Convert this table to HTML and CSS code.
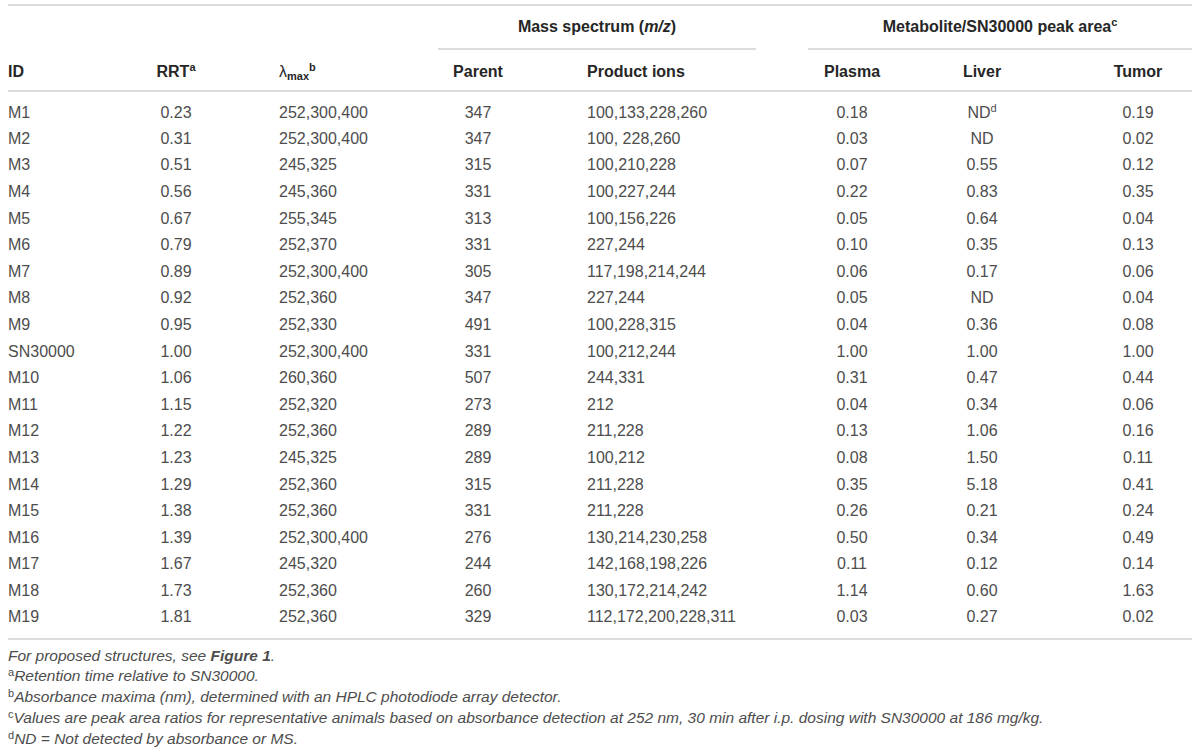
FILE: index.html
```html
<!DOCTYPE html>
<html lang="en">
<head>
    <meta charset="UTF-8">
    <title>Metabolites of SN30000</title>
    <link rel="stylesheet" href="styles.css">
</head>
<body>
    <div class="table-wrap">
        <table class="data">
            <colgroup>
                <col class="c-id">
                <col class="c-rrt">
                <col class="c-lambda">
                <col class="c-parent">
                <col class="c-ions">
                <col class="c-plasma">
                <col class="c-liver">
                <col class="c-tumor">
            </colgroup>
            <thead>
                <tr class="group-row">
                    <th colspan="3"></th>
                    <th colspan="2"><div class="group-line group-mass">Mass spectrum (<i>m/z</i>)</div></th>
                    <th colspan="3"><div class="group-line">Metabolite/SN30000 peak area<sup>c</sup></div></th>
                </tr>
                <tr class="head-row">
                    <th class="left">ID</th>
                    <th class="center">RRT<sup>a</sup></th>
                    <th class="left lam"><span class="lam-sym">λ</span><sub>max</sub><sup>b</sup></th>
                    <th class="center">Parent</th>
                    <th class="left ions">Product ions</th>
                    <th class="center">Plasma</th>
                    <th class="center">Liver</th>
                    <th class="center tumor">Tumor</th>
                </tr>
            </thead>
            <tbody id="rows"></tbody>
        </table>

        <div class="notes">
            <p><i>For proposed structures, see <b>Figure 1</b>.</i></p>
            <p><sup>a</sup><i>Retention time relative to SN30000.</i></p>
            <p><sup>b</sup><i>Absorbance maxima (nm), determined with an HPLC photodiode array detector.</i></p>
            <p><sup>c</sup><i>Values are peak area ratios for representative animals based on absorbance detection at 252 nm, 30 min after i.p. dosing with SN30000 at 186 mg/kg.</i></p>
            <p><sup>d</sup><i>ND = Not detected by absorbance or MS.</i></p>
        </div>
    </div>

    <script>
        const data = [
            ['M1', '0.23', '252,300,400', '347', '100,133,228,260', '0.18', 'ND<sup>d</sup>', '0.19'],
            ['M2', '0.31', '252,300,400', '347', '100, 228,260', '0.03', 'ND', '0.02'],
            ['M3', '0.51', '245,325', '315', '100,210,228', '0.07', '0.55', '0.12'],
            ['M4', '0.56', '245,360', '331', '100,227,244', '0.22', '0.83', '0.35'],
            ['M5', '0.67', '255,345', '313', '100,156,226', '0.05', '0.64', '0.04'],
            ['M6', '0.79', '252,370', '331', '227,244', '0.10', '0.35', '0.13'],
            ['M7', '0.89', '252,300,400', '305', '117,198,214,244', '0.06', '0.17', '0.06'],
            ['M8', '0.92', '252,360', '347', '227,244', '0.05', 'ND', '0.04'],
            ['M9', '0.95', '252,330', '491', '100,228,315', '0.04', '0.36', '0.08'],
            ['SN30000', '1.00', '252,300,400', '331', '100,212,244', '1.00', '1.00', '1.00'],
            ['M10', '1.06', '260,360', '507', '244,331', '0.31', '0.47', '0.44'],
            ['M11', '1.15', '252,320', '273', '212', '0.04', '0.34', '0.06'],
            ['M12', '1.22', '252,360', '289', '211,228', '0.13', '1.06', '0.16'],
            ['M13', '1.23', '245,325', '289', '100,212', '0.08', '1.50', '0.11'],
            ['M14', '1.29', '252,360', '315', '211,228', '0.35', '5.18', '0.41'],
            ['M15', '1.38', '252,360', '331', '211,228', '0.26', '0.21', '0.24'],
            ['M16', '1.39', '252,300,400', '276', '130,214,230,258', '0.50', '0.34', '0.49'],
            ['M17', '1.67', '245,320', '244', '142,168,198,226', '0.11', '0.12', '0.14'],
            ['M18', '1.73', '252,360', '260', '130,172,214,242', '1.14', '0.60', '1.63'],
            ['M19', '1.81', '252,360', '329', '112,172,200,228,311', '0.03', '0.27', '0.02']
        ];

        // same alignment classes as the header cells
        const aligns = ['left', 'center', 'left lam', 'center', 'left ions', 'center', 'center', 'center tumor'];
        const body = document.getElementById('rows');

        data.forEach(row => {
            const tr = document.createElement('tr');
            row.forEach((cell, i) => {
                const td = document.createElement('td');
                td.className = aligns[i];
                td.innerHTML = cell;
                tr.appendChild(td);
            });
            body.appendChild(tr);
        });
    </script>
</body>
</html>
```

FILE: styles.css
```css
:root {
    --text: #4d4d4d;
    --head: #262626;
    --rule: #dcdcdc;
}

* {
    box-sizing: border-box;
}

body {
    margin: 0;
    padding: 0 8px;
    background: #fff;
    color: var(--text);
    font-family: "Liberation Sans", Arial, sans-serif;
    font-size: 16px;
}

.data {
    width: 100%;
    margin-top: 4px;
    border-collapse: collapse;
    border-top: 2px solid var(--rule);
    table-layout: fixed;
}

.c-id { width: 122px; }
.c-rrt { width: 92px; }
.c-lambda { width: 216px; }
.c-parent { width: 80px; }
.c-ions { width: 290px; }
.c-plasma { width: 88px; }
.c-liver { width: 172px; }
.c-tumor { width: 124px; }

th {
    font-weight: bold;
    color: var(--head);
}

.group-row th {
    height: 44px;
    padding: 12px 0 0;
    vertical-align: top;
}

.group-line {
    padding-bottom: 12px;
    border-bottom: 2px solid var(--rule);
    text-align: center;
}

.group-mass {
    margin-right: 52px;
}

.data th,
.data td {
    padding-left: 0;
    padding-right: 0;
}

.head-row th {
    padding-top: 13px;
    padding-bottom: 9px;
    border-bottom: 2px solid var(--rule);
}

.lam-sym {
    font-weight: normal;
}

td {
    height: 26.6px;
    padding-top: 0;
    padding-bottom: 0;
    white-space: nowrap;
}

tbody tr:first-child td {
    height: 34.6px;
    padding-top: 8px;
}

tbody tr:last-child td {
    height: 34.3px;
    padding-bottom: 7.7px;
    border-bottom: 2px solid var(--rule);
}

.left { text-align: left; }
.center { text-align: center; }
.data .lam { padding-left: 57px; }
.data .ions { padding-left: 69px; }
.data .tumor { padding-left: 16px; }

sup {
    font-size: 11px;
    vertical-align: 6px;
    line-height: 0;
}

sub {
    font-size: 11px;
    vertical-align: -3px;
    line-height: 0;
}

.notes {
    padding-top: 6px;
    font-size: 15.5px;
}

.notes p {
    margin: 0;
    line-height: 20.75px;
}

.notes sup {
    font-size: 11px;
    vertical-align: 5px;
}
```
